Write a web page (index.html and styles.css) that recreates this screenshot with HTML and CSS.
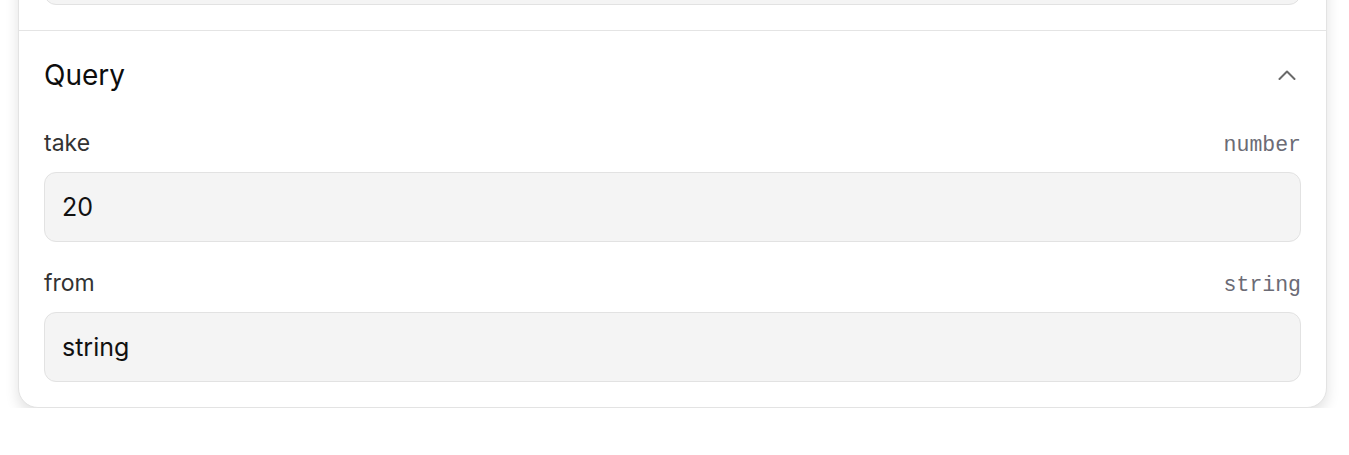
FILE: index.html
```html
<!DOCTYPE html>
<html lang="en">
<head>
    <meta charset="UTF-8">
    <meta name="viewport" content="width=device-width, initial-scale=1.0">
    <title>Request Parameters</title>
    <link rel="stylesheet" href="styles.css">
</head>
<body>
    <div class="params-card">
        <section class="param-section first">
            <input class="param-input" type="text" value="" aria-label="id">
        </section>

        <section class="param-section">
            <div class="section-header">
                <h2>Query</h2>
                <svg class="chevron" width="18" height="10" viewBox="0 0 18 10" aria-hidden="true">
                    <path d="M1.5 9 L9 1.5 L16.5 9" fill="none" stroke="#6a6a6a" stroke-width="2" stroke-linecap="round" stroke-linejoin="round"/>
                </svg>
            </div>

            <div class="fields">
                <div class="field">
                    <div class="field-label">
                        <label for="take">take</label>
                        <span class="field-type">number</span>
                    </div>
                    <input class="param-input" id="take" type="text" value="20">
                </div>
                <div class="field">
                    <div class="field-label">
                        <label for="from">from</label>
                        <span class="field-type">string</span>
                    </div>
                    <input class="param-input" id="from" type="text" value="string">
                </div>
            </div>
        </section>
    </div>
</body>
</html>
```

FILE: styles.css
```css
body {
    margin: 0;
    background-color: #ffffff;
    font-family: Inter, "Noto Sans", Arial, sans-serif;
    color: #111111;
}
.params-card {
    margin: -91px 22px 0 18px; /* page is scrolled down past the path section */
    border: 1px solid #e3e3e3;
    border-radius: 20px;
    background-color: #ffffff;
    box-shadow: 0 6px 14px rgba(0, 0, 0, 0.12);
}
.param-section {
    padding: 25px;
    border-top: 1px solid #e4e4e4;
}
.param-section.first {
    border-top: none;
}
.section-header {
    display: flex;
    align-items: center;
    justify-content: space-between;
    height: 38px;
    margin-bottom: 35px;
}
.section-header h2 {
    margin: 0;
    font-size: 28px;
    font-weight: 400;
    color: #0d0d0d;
}
.chevron {
    margin-right: 5px;
}
.fields {
    display: flex;
    flex-direction: column;
    gap: 27px;
}
.field-label {
    display: flex;
    align-items: baseline;
    justify-content: space-between;
    height: 28px;
    line-height: 28px;
    margin-bottom: 15px;
}
.field-label label {
    font-size: 23px;
    color: #333333;
}
.field-type {
    font-family: "Liberation Mono", "DejaVu Sans Mono", monospace;
    font-size: 21.5px;
    color: #6b6b75;
}
.param-input {
    display: block;
    box-sizing: border-box;
    width: 100%;
    height: 70px;
    padding: 0 17px;
    border: 1px solid #e2e2e2;
    border-radius: 12px;
    background-color: #f4f4f4;
    font-family: Inter, "Noto Sans", Arial, sans-serif;
    font-size: 25px;
    color: #111111;
    outline: none;
}
```
